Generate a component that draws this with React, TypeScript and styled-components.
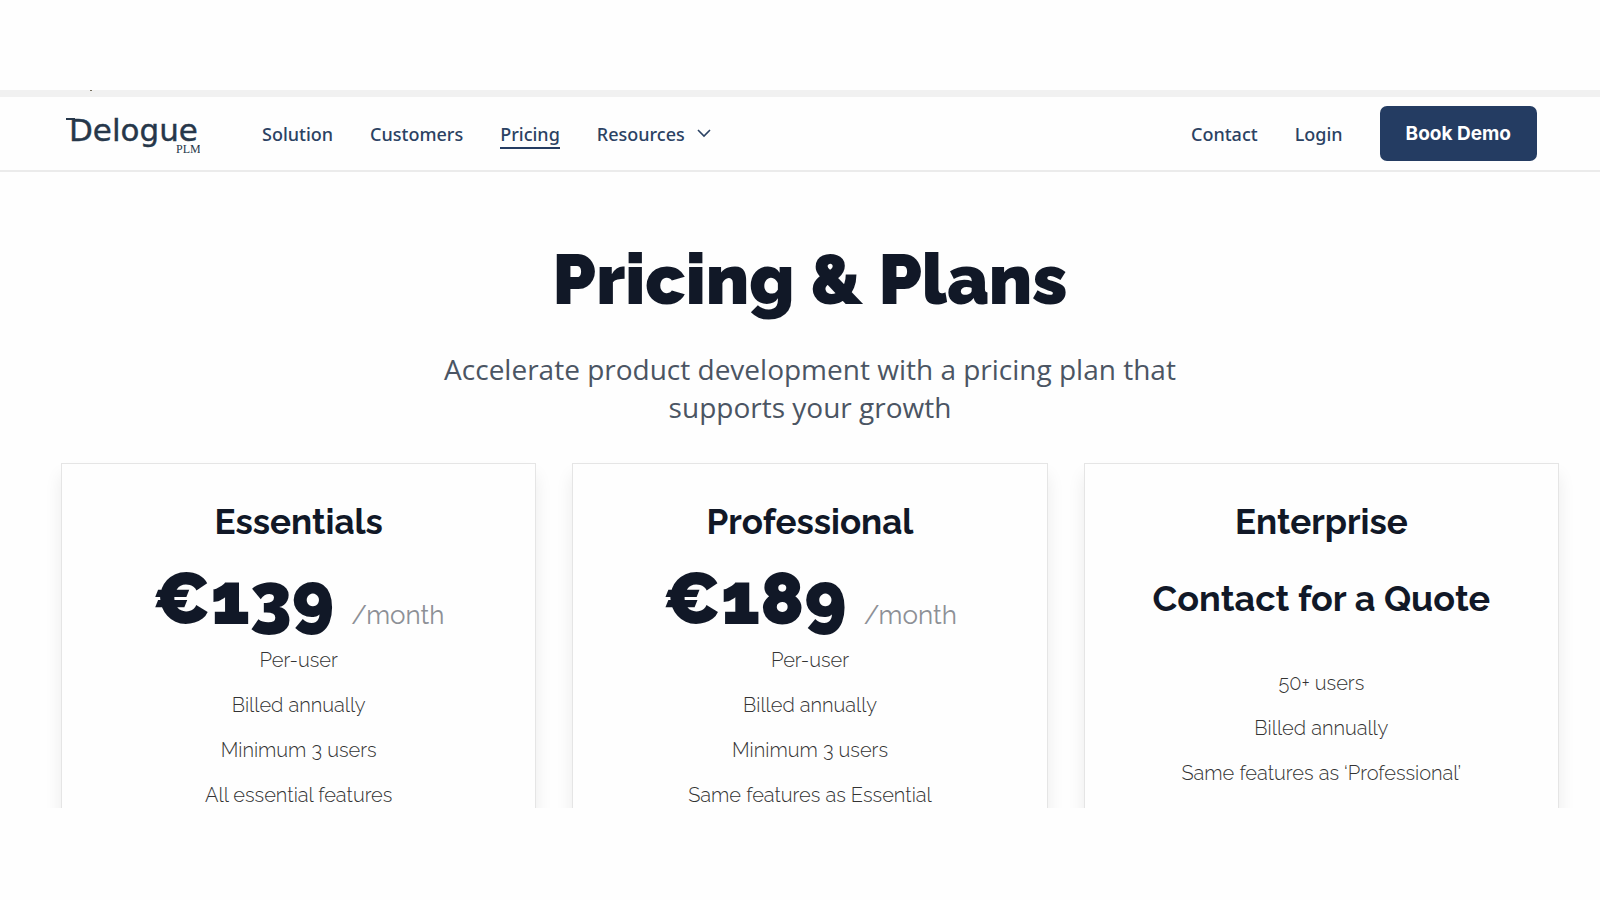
import React from "react";
import styled, { createGlobalStyle } from "styled-components";

const GlobalStyle = createGlobalStyle`
  *, *::before, *::after { box-sizing: border-box; }
  body { margin: 0; background: #fefefe; }
  h1, h2, p, ul { margin: 0; padding: 0; font-weight: inherit; }
  a { color: inherit; text-decoration: none; }
`;

const display = `"Raleway", "Lato", sans-serif`;
const body = `"Open Sans", "Noto Sans", sans-serif`;
const navigation = `"Noto Sans", "Open Sans", sans-serif`;

const Page = styled.div`
  display: flex;
  flex-direction: column;
  height: 100vh;
  padding: 90px 0 92px;
  font-family: ${body};
  color: #111827;
`;

const Viewport = styled.div`
  flex: 1;
  min-height: 0;
  overflow: hidden;
  background: #fefefe;
`;

const TopBand = styled.div`
  height: 7px;
  padding-left: 90px;
  background: #f1f1f1;

  &::before {
    content: "";
    display: block;
    width: 2px;
    height: 1px;
    background: #77705f;
  }
`;

const Header = styled.header`
  display: flex;
  align-items: center;
  justify-content: space-between;
  height: 75px;
  padding: 0 63px 0 66px;
  border-bottom: 2px solid #ebebeb;
  color: #2b4263;
  font-family: ${navigation};
  font-size: 18px;
  font-weight: 500;
  line-height: 26px;
`;

const Brand = styled.a`
  display: block;
  width: 134px;
  margin-right: 62px;

  svg { display: block; width: 100%; }
`;

const Group = styled.div`
  display: flex;
  align-items: center;
`;

const Nav = styled.nav`
  display: flex;
  align-items: center;
  gap: 37px;
`;

const NavLink = styled.a<{ $active?: boolean }>`
  padding-top: 2px;
  border-bottom: 2px solid ${(p) => (p.$active ? "#243c62" : "transparent")};
`;

const NavButton = styled.button`
  display: flex;
  align-items: center;
  gap: 12px;
  padding: 0;
  border: 0;
  background: none;
  color: inherit;
  font: inherit;
`;

const DemoButton = styled.button`
  height: 55px;
  padding: 0 26px;
  border: 0;
  border-radius: 7px;
  background: #243c62;
  color: #fff;
  font: 700 19px/26px "Inter", ${body};
`;

const Hero = styled.section`
  padding: 62px 0 37px 20px;
  text-align: center;
`;

const Title = styled.h1`
  font: 900 70px/90px ${display};
`;

const Subtitle = styled.p`
  max-width: 760px;
  margin: 26px auto 0;
  color: #4b5563;
  font-size: 28px;
  line-height: 38px;
`;

const Plans = styled.section`
  display: grid;
  grid-template-columns: repeat(3, 1fr);
  gap: 36px;
  padding: 0 41px 40px 61px;
`;

const Card = styled.article`
  min-height: 480px;
  padding: 34px 20px;
  border: 1px solid #e5e5e5;
  box-shadow: 0 12px 16px rgba(0, 0, 0, 0.08);
  font-family: ${display};
  text-align: center;
`;

const PlanName = styled.h2`
  font-size: 35px;
  font-weight: 700;
  line-height: 48px;
`;

const Price = styled.p`
  display: flex;
  align-items: baseline;
  justify-content: center;
  gap: 17px;
  height: 84px;
  margin-top: 8px;
`;

const Amount = styled.span`
  font-size: 72px;
  font-weight: 900;
  line-height: 90px;
`;

const Period = styled.span`
  color: #8d9096;
  font-size: 26px;
`;

const Quote = styled.p`
  height: 93px;
  margin-top: 22px;
  font-size: 36px;
  font-weight: 700;
  line-height: 60px;
`;

const Features = styled.ul`
  list-style: none;
  color: #333;
  font-size: 20px;
  font-weight: 300;
  font-feature-settings: "lnum" 0, "onum" 1, "calt" 0, "clig" 0, "liga" 0;
  line-height: 45px;
`;

function Logo() {
  return (
    <svg viewBox="0 0 134 46" role="img" aria-label="Delogue PLM" fill="#26374a">
      <path d="M0 8H9" stroke="#26374a" strokeWidth="2" />
      <text x="3" y="30" fontFamily="DejaVu Sans" fontSize="31" stroke="#26374a" strokeWidth="0.4">Delogue</text>
      <text x="110" y="42" fontFamily="Liberation Serif" fontSize="12">PLM</text>
    </svg>
  );
}

function Chevron() {
  return (
    <svg width="14" height="9" viewBox="0 0 14 9" fill="none" stroke="currentColor" strokeWidth="1.6" aria-hidden="true">
      <path d="M1 1L7 7L13 1" />
    </svg>
  );
}

const plans = [
  { name: "Essentials", price: "€139", features: ["Per-user", "Billed annually", "Minimum 3 users", "All essential features"] },
  { name: "Professional", price: "€189", features: ["Per-user", "Billed annually", "Minimum 3 users", "Same features as Essential"] },
  { name: "Enterprise", features: ["50+ users", "Billed annually", "Same features as ‘Professional’"] },
];

export default function App() {
  return (
    <Page>
      <GlobalStyle />
      <Viewport>
        <TopBand />
        <Header>
          <Group>
            <Brand href="#"><Logo /></Brand>
            <Nav aria-label="Main">
              <NavLink href="#">Solution</NavLink>
              <NavLink href="#">Customers</NavLink>
              <NavLink href="#" $active>Pricing</NavLink>
              <NavButton type="button">Resources <Chevron /></NavButton>
            </Nav>
          </Group>
          <Nav aria-label="Account">
            <a href="#">Contact</a>
            <a href="#">Login</a>
            <DemoButton type="button">Book Demo</DemoButton>
          </Nav>
        </Header>
        <main>
          <Hero>
            <Title>Pricing &amp; Plans</Title>
            <Subtitle>Accelerate product development with a pricing plan that supports your growth</Subtitle>
          </Hero>
          <Plans>
            {plans.map((plan) => (
              <Card key={plan.name}>
                <PlanName>{plan.name}</PlanName>
                {plan.price ? (
                  <Price><Amount>{plan.price}</Amount><Period>/month</Period></Price>
                ) : (
                  <Quote>Contact for a Quote</Quote>
                )}
                <Features>
                  {plan.features.map((f) => <li key={f}>{f}</li>)}
                </Features>
              </Card>
            ))}
          </Plans>
        </main>
      </Viewport>
    </Page>
  );
}
